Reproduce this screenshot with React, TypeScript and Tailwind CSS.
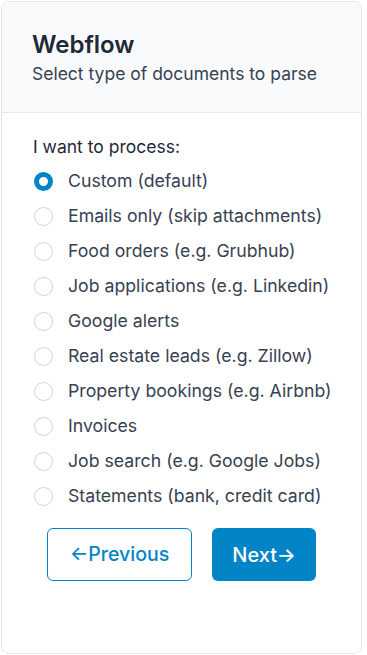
import { useState } from 'react'

const OPCIONES = [
  'Custom (default)',
  'Emails only (skip attachments)',
  'Food orders (e.g. Grubhub)',
  'Job applications (e.g. Linkedin)',
  'Google alerts',
  'Real estate leads (e.g. Zillow)',
  'Property bookings (e.g. Airbnb)',
  'Invoices',
  'Job search (e.g. Google Jobs)',
  'Statements (bank, credit card)',
]

export default function App() {
  const [sel, setSel] = useState(0)

  return (
    <div className="w-[367px] h-[655px] bg-white p-px" style={{ fontFamily: 'Inter, "Noto Sans", sans-serif' }}>
      <div className="w-[361px] h-[653px] rounded-lg border border-[#e5e7eb] overflow-hidden flex flex-col">

        {/* Header */}
        <div className="h-[111px] bg-[#f8fafc] border-b border-[#e5e7eb] px-[30px] pt-[28px]">
          <h1 className="text-[24px] leading-[30px] font-semibold text-[#1f2937]">Webflow</h1>
          <p className="text-[17.5px] leading-[24px] text-[#374151] mt-[2px]">Select type of documents to parse</p>
        </div>

        {/* Body */}
        <div className="px-[31px] pt-[22px]">
          <p className="text-[17.5px] leading-[24px] text-[#1f2937]">I want to process:</p>
          <div className="mt-[5px] ml-px">
            {OPCIONES.map((op, i) => (
              <label key={op} className="flex items-center h-[35px] cursor-pointer" onClick={() => setSel(i)}>
                <span
                  className={`w-[19px] h-[19px] rounded-full flex-shrink-0 ${
                    sel === i ? 'border-[5px] border-[#0284c7] bg-white' : 'border border-[#d1d5db] bg-white'
                  }`}
                />
                <span className="ml-[15px] text-[17.7px] text-[#374151] whitespace-nowrap">{op}</span>
              </label>
            ))}
          </div>

          <div className="flex gap-[20px] mt-[14px] ml-[14px]">
            <button className="w-[145px] h-[53px] rounded-md border border-[#0284c7] text-[#0284c7] text-[19.5px] font-medium flex items-center justify-center">
              ←Previous
            </button>
            <button className="w-[104px] h-[53px] rounded-md bg-[#0284c7] text-white text-[20px] font-medium flex items-center justify-center">
              Next→
            </button>
          </div>
        </div>
      </div>
    </div>
  )
}
